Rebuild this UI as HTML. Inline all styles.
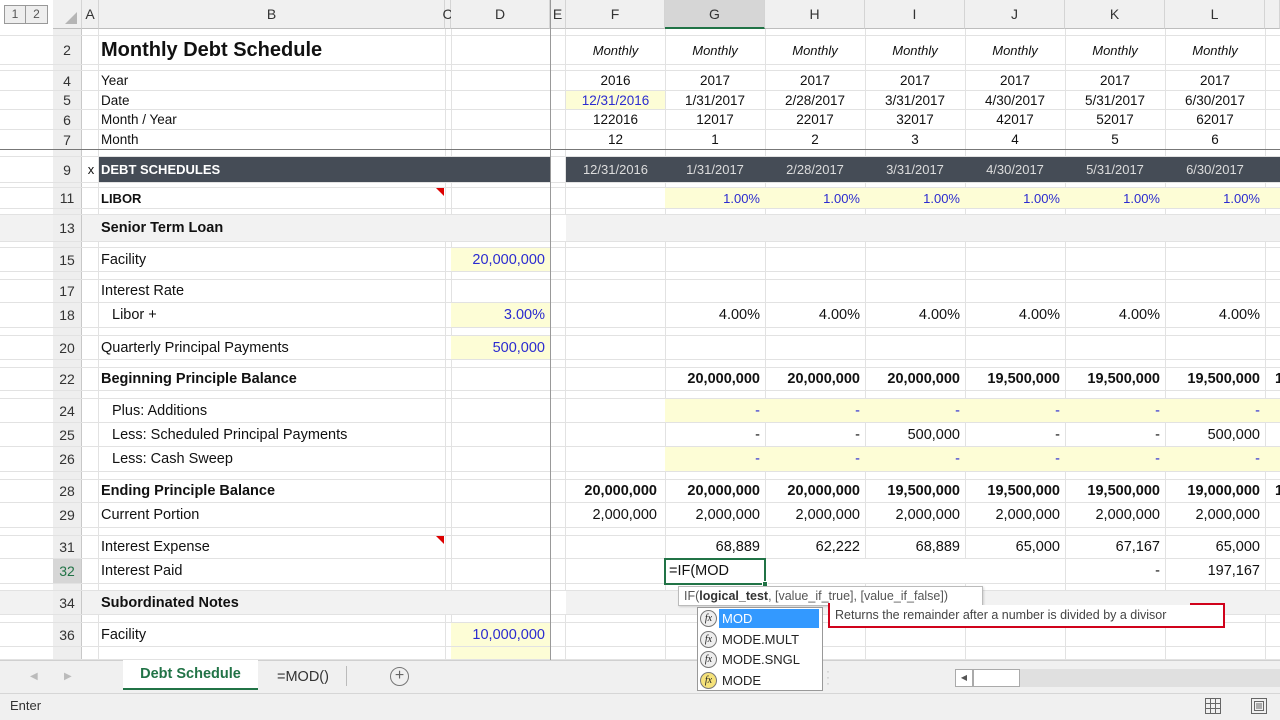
<!DOCTYPE html>
<html><head><meta charset="utf-8">
<style>
*{margin:0;padding:0;box-sizing:border-box}
body{width:1280px;height:720px;overflow:hidden;background:#fff;font-family:"Liberation Sans",Arial,sans-serif;font-size:14.5px;color:#111;position:relative}
.a{position:absolute}
.r{position:absolute;left:0;width:1280px;border-bottom:1px solid #e2e2e2}
.r>div{position:absolute;top:0;height:100%;white-space:nowrap;overflow:visible;display:flex;align-items:center}
.n{left:53px;width:29px;justify-content:center;background:#eeeeee;color:#333;font-size:14px;border-right:1px solid #c8c8c8}
.cb{left:99px;width:346px;padding-left:2px}
.cd{left:451px;width:99px;justify-content:flex-end;padding-right:5px}
.cf{left:566px;width:99px;justify-content:flex-end;padding-right:8px}
.cg{left:665px;width:100px;justify-content:flex-end;padding-right:5px}
.ch{left:765px;width:100px;justify-content:flex-end;padding-right:5px}
.ci{left:865px;width:100px;justify-content:flex-end;padding-right:5px}
.cj{left:965px;width:100px;justify-content:flex-end;padding-right:5px}
.ck{left:1065px;width:100px;justify-content:flex-end;padding-right:5px}
.cl{left:1165px;width:100px;justify-content:flex-end;padding-right:5px}
.ctr>div.v{justify-content:center;padding-right:0}
.y{background:#fdfdd6}
.bl{color:#2b2bd0}
.b{font-weight:bold}
.vl{position:absolute;top:29px;height:631px;width:1px;background:#e2e2e2}
.hd{position:absolute;top:0;height:29px;background:#f0f0f0;border-right:1px solid #d4d4d4;border-bottom:1px solid #bdbdbd;display:flex;align-items:center;justify-content:center;font-size:14px;color:#333}
.ov{z-index:10}
</style></head><body>

<div class="vl" style="left:98px"></div>
<div class="vl" style="left:445px"></div>
<div class="vl" style="left:451px"></div>
<div class="vl" style="left:565px"></div>
<div class="vl" style="left:665px"></div>
<div class="vl" style="left:765px"></div>
<div class="vl" style="left:865px"></div>
<div class="vl" style="left:965px"></div>
<div class="vl" style="left:1065px"></div>
<div class="vl" style="left:1165px"></div>
<div class="vl" style="left:1265px"></div>

<div class="a" style="left:4px;top:5px;width:44px;height:19px;border:1px solid #999;background:#eee;font-size:12px;color:#555;display:flex"><span style="width:21px;text-align:center;border-right:1px solid #999;line-height:17px">1</span><span style="width:21px;text-align:center;line-height:17px">2</span></div>

<div class="hd" style="left:53px;width:29px"><svg width="14" height="14" style="position:absolute;right:3px;bottom:3px"><path d="M13 1 L13 13 L1 13Z" fill="#b5b5b5"/></svg></div>
<div class="hd" style="left:82px;width:17px">A</div>
<div class="hd" style="left:99px;width:346px">B</div>
<div class="hd" style="left:445px;width:6px">C</div>
<div class="hd" style="left:451px;width:99px">D</div>
<div class="hd" style="left:550px;width:16px">E</div>
<div class="hd" style="left:566px;width:99px">F</div>
<div class="hd" style="left:665px;width:100px;background:#d6d6d6;border-bottom:2px solid #217346">G</div>
<div class="hd" style="left:765px;width:100px">H</div>
<div class="hd" style="left:865px;width:100px">I</div>
<div class="hd" style="left:965px;width:100px">J</div>
<div class="hd" style="left:1065px;width:100px">K</div>
<div class="hd" style="left:1165px;width:100px">L</div>
<div class="hd" style="left:1265px;width:15px"></div>

<div class="r" style="top:29px;height:7px"><div class="n"></div></div>
<div class="r" style="top:36px;height:29px"><div class="n">2</div><div class="cb b" style="font-size:20px">Monthly Debt Schedule</div>
<div class="cf" style="justify-content:center;padding:0;font-style:italic;font-size:13px">Monthly</div><div class="cg" style="justify-content:center;padding:0;font-style:italic;font-size:13px">Monthly</div><div class="ch" style="justify-content:center;padding:0;font-style:italic;font-size:13px">Monthly</div><div class="ci" style="justify-content:center;padding:0;font-style:italic;font-size:13px">Monthly</div><div class="cj" style="justify-content:center;padding:0;font-style:italic;font-size:13px">Monthly</div><div class="ck" style="justify-content:center;padding:0;font-style:italic;font-size:13px">Monthly</div><div class="cl" style="justify-content:center;padding:0;font-style:italic;font-size:13px">Monthly</div></div>
<div class="r" style="top:65px;height:6px"><div class="n"></div></div>
<div class="r ctr" style="top:71px;height:20px;font-size:13.5px"><div class="n">4</div><div class="cb">Year</div><div class="cf v">2016</div><div class="cg v">2017</div><div class="ch v">2017</div><div class="ci v">2017</div><div class="cj v">2017</div><div class="ck v">2017</div><div class="cl v">2017</div></div>
<div class="r ctr" style="top:91px;height:19px;font-size:13.5px"><div class="n">5</div><div class="cb">Date</div><div class="cf v y bl">12/31/2016</div><div class="cg v">1/31/2017</div><div class="ch v">2/28/2017</div><div class="ci v">3/31/2017</div><div class="cj v">4/30/2017</div><div class="ck v">5/31/2017</div><div class="cl v">6/30/2017</div></div>
<div class="r ctr" style="top:110px;height:20px;font-size:13.5px"><div class="n">6</div><div class="cb">Month / Year</div><div class="cf v">122016</div><div class="cg v">12017</div><div class="ch v">22017</div><div class="ci v">32017</div><div class="cj v">42017</div><div class="ck v">52017</div><div class="cl v">62017</div></div>
<div class="r ctr" style="top:130px;height:20px;font-size:13.5px"><div class="n">7</div><div class="cb">Month</div><div class="cf v">12</div><div class="cg v">1</div><div class="ch v">2</div><div class="ci v">3</div><div class="cj v">4</div><div class="ck v">5</div><div class="cl v">6</div></div>
<div class="a" style="left:0;top:149px;width:1280px;height:1px;background:#777"></div>
<div class="r" style="top:150px;height:7px"><div class="n"></div></div>
<div class="r ctr" style="top:157px;height:26px;font-size:13px"><div class="n">9</div><div style="left:84px;width:14px;justify-content:center">x</div><div class="cb b" style="background:#454c56;color:#fff;width:451px">DEBT SCHEDULES</div>
<div style="left:566px;width:714px;background:#454c56"></div>
<div class="cf v" style="color:#ddd">12/31/2016</div><div class="cg v" style="color:#ddd">1/31/2017</div><div class="ch v" style="color:#ddd">2/28/2017</div><div class="ci v" style="color:#ddd">3/31/2017</div><div class="cj v" style="color:#ddd">4/30/2017</div><div class="ck v" style="color:#ddd">5/31/2017</div><div class="cl v" style="color:#ddd">6/30/2017</div></div>
<div class="r" style="top:183px;height:5px"><div class="n"></div></div>
<div class="r" style="top:188px;height:21px;font-size:13px"><div class="n">11</div><div class="cb b">LIBOR</div>
<div class="cg y bl">1.00%</div><div class="ch y bl">1.00%</div><div class="ci y bl">1.00%</div><div class="cj y bl">1.00%</div><div class="ck y bl">1.00%</div><div class="cl y bl">1.00%</div><div style="left:1265px;width:15px" class="y"></div></div>
<div class="r" style="top:209px;height:6px"><div class="n"></div></div>
<div class="r" style="top:215px;height:27px;background:#f2f2f2"><div class="n">13</div><div class="cb b">Senior Term Loan</div><div style="left:550px;width:16px;background:#fff"></div></div>
<div class="r" style="top:242px;height:6px"><div class="n"></div></div>
<div class="r" style="top:248px;height:24px"><div class="n">15</div><div class="cb">Facility</div><div class="cd y bl">20,000,000</div></div>
<div class="r" style="top:272px;height:8px"><div class="n"></div></div>
<div class="r" style="top:280px;height:23px"><div class="n">17</div><div class="cb">Interest Rate</div></div>
<div class="r" style="top:303px;height:25px"><div class="n">18</div><div class="cb" style="padding-left:13px">Libor +</div><div class="cd y bl">3.00%</div>
<div class="cg">4.00%</div><div class="ch">4.00%</div><div class="ci">4.00%</div><div class="cj">4.00%</div><div class="ck">4.00%</div><div class="cl">4.00%</div></div>
<div class="r" style="top:328px;height:8px"><div class="n"></div></div>
<div class="r" style="top:336px;height:24px"><div class="n">20</div><div class="cb">Quarterly Principal Payments</div><div class="cd y bl">500,000</div></div>
<div class="r" style="top:360px;height:8px"><div class="n"></div></div>
<div class="r b" style="top:368px;height:23px"><div class="n" style="font-weight:normal">22</div><div class="cb">Beginning Principle Balance</div>
<div class="cg">20,000,000</div><div class="ch">20,000,000</div><div class="ci">20,000,000</div><div class="cj">19,500,000</div><div class="ck">19,500,000</div><div class="cl">19,500,000</div><div style="left:1275px">1</div></div>
<div class="r" style="top:391px;height:8px"><div class="n"></div></div>
<div class="r" style="top:399px;height:24px"><div class="n">24</div><div class="cb" style="padding-left:13px">Plus: Additions</div>
<div class="cg y bl">-</div><div class="ch y bl">-</div><div class="ci y bl">-</div><div class="cj y bl">-</div><div class="ck y bl">-</div><div class="cl y bl">-</div><div style="left:1265px;width:15px" class="y"></div></div>
<div class="r" style="top:423px;height:24px"><div class="n">25</div><div class="cb" style="padding-left:13px">Less: Scheduled Principal Payments</div>
<div class="cg">-</div><div class="ch">-</div><div class="ci">500,000</div><div class="cj">-</div><div class="ck">-</div><div class="cl">500,000</div></div>
<div class="r" style="top:447px;height:25px"><div class="n">26</div><div class="cb" style="padding-left:13px">Less: Cash Sweep</div>
<div class="cg y bl">-</div><div class="ch y bl">-</div><div class="ci y bl">-</div><div class="cj y bl">-</div><div class="ck y bl">-</div><div class="cl y bl">-</div><div style="left:1265px;width:15px" class="y"></div></div>
<div class="r" style="top:472px;height:8px"><div class="n"></div></div>
<div class="r b" style="top:480px;height:23px"><div class="n" style="font-weight:normal">28</div><div class="cb">Ending Principle Balance</div>
<div class="cf">20,000,000</div><div class="cg">20,000,000</div><div class="ch">20,000,000</div><div class="ci">19,500,000</div><div class="cj">19,500,000</div><div class="ck">19,500,000</div><div class="cl">19,000,000</div><div style="left:1275px">1</div></div>
<div class="r" style="top:503px;height:25px"><div class="n">29</div><div class="cb">Current Portion</div>
<div class="cf">2,000,000</div><div class="cg">2,000,000</div><div class="ch">2,000,000</div><div class="ci">2,000,000</div><div class="cj">2,000,000</div><div class="ck">2,000,000</div><div class="cl">2,000,000</div></div>
<div class="r" style="top:528px;height:8px"><div class="n"></div></div>
<div class="r" style="top:536px;height:23px"><div class="n">31</div><div class="cb">Interest Expense</div>
<div class="cg">68,889</div><div class="ch">62,222</div><div class="ci">68,889</div><div class="cj">65,000</div><div class="ck">67,167</div><div class="cl">65,000</div></div>
<div class="r" style="top:559px;height:25px"><div class="n" style="background:#d6d6d6;color:#217346">32</div><div class="cb">Interest Paid</div>
<div style="left:665px;width:400px;background:#fff"></div>
<div class="ck">-</div><div class="cl">197,167</div></div>
<div class="r" style="top:584px;height:7px"><div class="n"></div></div>
<div class="r" style="top:591px;height:24px;background:#f2f2f2"><div class="n">34</div><div class="cb b">Subordinated Notes</div><div style="left:550px;width:16px;background:#fff"></div></div>
<div class="r" style="top:615px;height:8px"><div class="n"></div></div>
<div class="r" style="top:623px;height:24px"><div class="n">36</div><div class="cb">Facility</div><div class="cd y bl">10,000,000</div></div>
<div class="r" style="top:647px;height:13px"><div class="n"></div><div class="cd y"></div></div>

<div class="a" style="left:550px;top:0;width:1px;height:660px;background:#999"></div>
<svg class="a" style="left:436px;top:188px" width="8" height="8"><path d="M0 0H8V8Z" fill="#d00"/></svg>
<svg class="a" style="left:436px;top:536px" width="8" height="8"><path d="M0 0H8V8Z" fill="#d00"/></svg>

<!-- sheet tab bar -->
<div class="a" style="left:0;top:660px;width:1280px;height:33px;background:#f0f0f0;border-top:1px solid #d0d0d0"></div>
<div class="a" style="left:30px;top:671px;color:#bbb;font-size:10px">◀</div>
<div class="a" style="left:64px;top:671px;color:#bbb;font-size:10px">▶</div>
<div class="a" style="left:123px;top:660px;width:135px;height:30px;background:#fff;border-bottom:2px solid #217346;color:#217346;font-weight:bold;font-size:14.5px;display:flex;align-items:center;justify-content:center">Debt Schedule</div>
<div class="a" style="left:258px;top:660px;width:90px;height:33px;font-size:14.5px;color:#333;display:flex;align-items:center;justify-content:center">=MOD()</div>
<div class="a" style="left:346px;top:666px;width:1px;height:20px;background:#bbb"></div>
<div class="a" style="left:390px;top:667px;width:19px;height:19px;border:1.5px solid #777;border-radius:50%;color:#666;font-size:16px;line-height:15px;text-align:center">+</div>
<div class="a" style="left:826px;top:668px;color:#bbb;font-size:12px;line-height:6px">·<br>·<br>·</div>
<div class="a" style="left:955px;top:669px;width:325px;height:18px;background:#e0e0e0"></div>
<div class="a" style="left:955px;top:669px;width:18px;height:18px;border:1px solid #aaa;background:#fff;font-size:8px;color:#555;text-align:center;line-height:16px">◀</div>
<div class="a" style="left:973px;top:669px;width:47px;height:18px;border:1px solid #aaa;background:#fff"></div>

<!-- status bar -->
<div class="a" style="left:0;top:693px;width:1280px;height:27px;background:#f0f0f0;border-top:1px solid #d6d6d6"></div>
<div class="a" style="left:10px;top:698px;font-size:13px;color:#333">Enter</div>
<svg class="a" style="left:1205px;top:698px" width="16" height="16"><path d="M0.5 0.5H15.5V15.5H0.5ZM5.5 0.5V15.5M10.5 0.5V15.5M0.5 5.5H15.5M0.5 10.5H15.5" stroke="#666" fill="none"/></svg>
<svg class="a" style="left:1251px;top:698px" width="16" height="16"><path d="M0.5 0.5H15.5V15.5H0.5ZM3.5 3.5H12.5V12.5H3.5ZM5 6H11M5 8H11M5 10H11" stroke="#666" fill="none"/></svg>

<!-- overlays -->
<div class="a ov" style="left:664px;top:558px;width:102px;height:27px;border:2px solid #217346;background:#fff;font-size:14.5px;line-height:23px;padding-left:3px">=IF(MOD</div>
<div class="a ov" style="left:762px;top:581px;width:6px;height:6px;background:#217346;border:1px solid #fff"></div>

<div class="a ov" style="left:678px;top:586px;width:305px;height:20px;border:1px solid #bbb;background:#fff;font-size:12.5px;color:#555;line-height:18px;padding-left:5px;box-shadow:1px 1px 2px rgba(0,0,0,.15)">IF(<b style="color:#333">logical_test</b>, [value_if_true], [value_if_false])</div>

<div class="a ov" style="left:697px;top:607px;width:126px;height:84px;border:1px solid #999;background:#fff;font-size:13px;color:#222">
 <div style="position:absolute;left:2px;top:1px;width:120px;height:19px;display:flex;align-items:center"><span style="width:17px;height:17px;border:1px solid #777;border-radius:50%;font-style:italic;font-size:10px;display:flex;align-items:center;justify-content:center;font-family:'Liberation Serif',serif;background:#eee">fx</span><span style="background:#3399ff;color:#fff;height:19px;line-height:19px;padding-left:3px;width:100px;margin-left:2px">MOD</span></div>
 <div style="position:absolute;left:2px;top:22px;height:19px;display:flex;align-items:center"><span style="width:17px;height:17px;border:1px solid #777;border-radius:50%;font-style:italic;font-size:10px;display:flex;align-items:center;justify-content:center;font-family:'Liberation Serif',serif;background:#eee">fx</span><span style="padding-left:5px">MODE.MULT</span></div>
 <div style="position:absolute;left:2px;top:42px;height:19px;display:flex;align-items:center"><span style="width:17px;height:17px;border:1px solid #777;border-radius:50%;font-style:italic;font-size:10px;display:flex;align-items:center;justify-content:center;font-family:'Liberation Serif',serif;background:#eee">fx</span><span style="padding-left:5px">MODE.SNGL</span></div>
 <div style="position:absolute;left:2px;top:63px;height:19px;display:flex;align-items:center"><span style="width:17px;height:17px;border:1px solid #777;border-radius:50%;font-style:italic;font-size:10px;display:flex;align-items:center;justify-content:center;font-family:'Liberation Serif',serif;background:#f5e27a">fx</span><span style="padding-left:5px">MODE</span></div>
</div>
<div class="a ov" style="left:828px;top:605px;width:397px;height:23px;border:2px solid #d0021b;border-top:none;background:#fff;font-size:12.5px;color:#444;line-height:21px;padding-left:5px">Returns the remainder after a number is divided by a divisor</div>
<div class="a ov" style="left:828px;top:603px;width:2px;height:6px;background:#d0021b"></div>
<div class="a ov" style="left:1190px;top:603px;width:35px;height:2px;background:#d0021b"></div>
<div class="a ov" style="left:1223px;top:603px;width:2px;height:6px;background:#d0021b"></div>
</body></html>
